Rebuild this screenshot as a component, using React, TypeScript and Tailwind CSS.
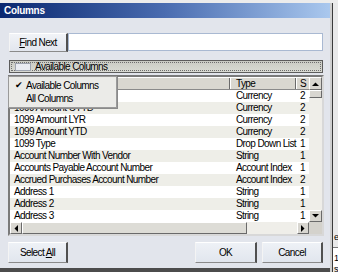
import React from "react";

const rows: [string, string, string][] = [
  ["1099 Amount", "Currency", "2"],
  ["1099 Amount CYTD", "Currency", "2"],
  ["1099 Amount LYR", "Currency", "2"],
  ["1099 Amount YTD", "Currency", "2"],
  ["1099 Type", "Drop Down List", "1"],
  ["Account Number With Vendor", "String", "1"],
  ["Accounts Payable Account Number", "Account Index", "1"],
  ["Accrued Purchases Account Number", "Account Index", "2"],
  ["Address 1", "String", "1"],
  ["Address 2", "String", "1"],
  ["Address 3", "String", "1"],
];

function Tri({ dir }: { dir: "up" | "down" | "left" | "right" }) {
  const pts =
    dir === "up"
      ? "0,4 7,4 3.5,0.5"
      : dir === "down"
      ? "0,0 7,0 3.5,3.5"
      : dir === "left"
      ? "4,0 4,7 0.5,3.5"
      : "0,0 0,7 3.5,3.5";
  const w = dir === "up" || dir === "down" ? 7 : 4;
  const h = dir === "up" || dir === "down" ? 4 : 7;
  return (
    <svg width={w} height={h} viewBox={`0 0 ${w} ${h}`}>
      <polygon points={pts} fill="#000" />
    </svg>
  );
}

function ScrollBtn({ dir, cls }: { dir: "up" | "down" | "left" | "right"; cls: string }) {
  return (
    <div
      className={`flex items-center justify-center bg-[#d8d6d0] border-t border-l border-t-white border-l-white border-r border-b border-r-[#6a6a6a] border-b-[#6a6a6a] ${cls}`}
    >
      <Tri dir={dir} />
    </div>
  );
}

export default function App() {
  return (
    <div className="relative w-[338px] h-[272px] overflow-hidden bg-[#e2e5ec] font-['Liberation_Sans',Arial,sans-serif] text-[10px] tracking-[-0.6px] leading-none text-black">
      <div className="h-[3px] bg-[#ececec]" />
      <div className="flex h-[269px]">
        {/* dialog */}
        <div className="w-[330px] flex flex-col bg-[#e2e5ec]">
          <div className="h-[15px] flex items-center pl-[4px] bg-gradient-to-r from-[#0b2870] via-[#4a6cb0] to-[#aac8ee]">
            <span className="text-white font-bold text-[10px] tracking-[-0.3px]">Columns</span>
          </div>
          <div className="flex-1 flex flex-col pl-[8px] pr-[6px] pt-[15px]">
            {/* find row */}
            <div className="flex h-[19px] ml-[1px] mr-[1px]">
              <div className="w-[59px] h-[19px] flex items-center justify-center bg-gradient-to-b from-[#f1f3f7] to-[#e2e6ee] border-t border-l border-t-white border-l-[#f4f4f4] border-r-2 border-r-[#505050] border-b border-b-[#8a8a8a]">
                <span>
                  <span className="underline">F</span>ind Next
                </span>
              </div>
              <div className="flex-1 h-[18px] bg-white border border-[#a9b9d2]" />
            </div>
            {/* bar */}
            <div className="mt-[8px] ml-[1px] mr-[1px] h-[13px] border border-[#5c5c5c] bg-gradient-to-b from-[#c9cbc3] to-[#d9dad3] p-[1px]">
              <div className="h-full border border-dotted border-[#6e6e6e] flex items-center">
                <div className="ml-[3px] w-[16px] h-[8px] bg-[#e9ecf2] border border-[#9ea4b0]" />
                <span className="ml-[4px]">Available Columns</span>
              </div>
            </div>
            {/* list */}
            <div className="mt-[2px] h-[161px] border-2 border-t-[#7a7a7a] border-l-[#7a7a7a] border-r-[#d8d8d8] border-b-[#d8d8d8] flex flex-col bg-white">
              <div className="flex flex-1 min-h-0">
                <div className="flex-1 flex flex-col">
                  {/* header */}
                  <div className="flex h-[13px] bg-[#d9d7d0] border-t border-t-white border-b border-b-[#8a8a8a]">
                    <div className="w-[220px] border-r border-r-[#6a6a6a]" />
                    <div className="w-[66px] border-r border-r-[#6a6a6a] border-l border-l-white pl-[5px] flex items-center">Type</div>
                    <div className="flex-1 border-l border-l-white pl-[3px] flex items-center overflow-hidden">S</div>
                  </div>
                  {rows.map((r, i) => (
                    <div
                      key={i}
                      className={`flex h-[12px] items-center ${i % 2 === 1 ? "bg-[#eeeee8]" : "bg-white"}`}
                    >
                      <div className="w-[220px] pl-[4px] whitespace-nowrap">{r[0]}</div>
                      <div className="w-[66px] pl-[6px] whitespace-nowrap">{r[1]}</div>
                      <div className="flex-1 pl-[4px]">{r[2]}</div>
                    </div>
                  ))}
                </div>
                {/* vertical scrollbar */}
                <div className="w-[13px] flex flex-col bg-[#efeee9]">
                  <ScrollBtn dir="up" cls="h-[13px]" />
                  <div className="h-[8px] bg-[#d8d6d0] border-t border-l border-t-white border-l-white border-r border-b border-r-[#6a6a6a] border-b-[#6a6a6a]" />
                  <div className="flex-1" />
                  <ScrollBtn dir="down" cls="h-[12px]" />
                </div>
              </div>
              {/* horizontal scrollbar */}
              <div className="flex h-[12px] bg-[#efeee9]">
                <ScrollBtn dir="left" cls="w-[12px]" />
                <div className="w-[225px] bg-[#dddcd6] border-t border-l border-t-white border-l-white border-r border-b border-r-[#6a6a6a] border-b-[#6a6a6a]" />
                <div className="flex-1" />
                <ScrollBtn dir="right" cls="w-[12px]" />
                <div className="w-[13px] bg-[#d4d2cc]" />
              </div>
            </div>
            {/* buttons */}
            <div className="mt-[6px] flex h-[21px] mr-[1px]">
              <div className="w-[60px] flex items-center justify-center bg-gradient-to-b from-[#eef1f6] to-[#e1e6ee] border-t border-l border-t-white border-l-[#f4f4f4] border-r-2 border-r-[#505050] border-b border-b-[#8a8a8a]">
                <span>
                  Select <span className="underline">A</span>ll
                </span>
              </div>
              <div className="flex-1" />
              <div className="w-[62px] flex items-center justify-center bg-gradient-to-b from-[#eef1f6] to-[#e1e6ee] border-t border-l border-t-white border-l-[#f4f4f4] border-r-2 border-r-[#505050] border-b border-b-[#8a8a8a]">
                OK
              </div>
              <div className="w-[5px]" />
              <div className="w-[61px] flex items-center justify-center bg-gradient-to-b from-[#eef1f6] to-[#e1e6ee] border-t border-l border-t-white border-l-[#f4f4f4] border-r-2 border-r-[#505050] border-b border-b-[#8a8a8a]">
                Cancel
              </div>
            </div>
          </div>
          <div className="h-[4px] bg-[#4c4c4c]" />
        </div>
        {/* background window edge */}
        <div className="w-[2px] bg-[#cfcfcf]" />
        <div className="w-[1px] bg-[#3a3a3a]" />
        <div className="relative flex-1 bg-[#e9e9e9] overflow-hidden">
          <div className="absolute left-[1px] top-[230px] text-[9px]">e</div>
          <div className="absolute left-0 top-[244px] w-[6px] h-[20px] bg-white border-t border-t-[#7a7a7a]" />
          <div className="absolute left-[1px] top-[251px] text-[9px]">18</div>
          <div className="absolute left-[1px] top-[262px] text-[9px]">s</div>
        </div>
      </div>
      {/* dropdown menu */}
      <div className="absolute left-[8px] top-[76px] w-[109px] h-[32px] bg-[#ebebe8] border border-[#9a9a9a] shadow-[1px_1px_0_#8a8a8a] flex flex-col justify-center">
        <div className="flex items-center h-[13px]">
          <span className="w-[17px] pl-[6px] text-[9px]">✔</span>
          <span>Available Columns</span>
        </div>
        <div className="flex items-center h-[13px] pl-[17px]">All Columns</div>
      </div>
    </div>
  );
}
